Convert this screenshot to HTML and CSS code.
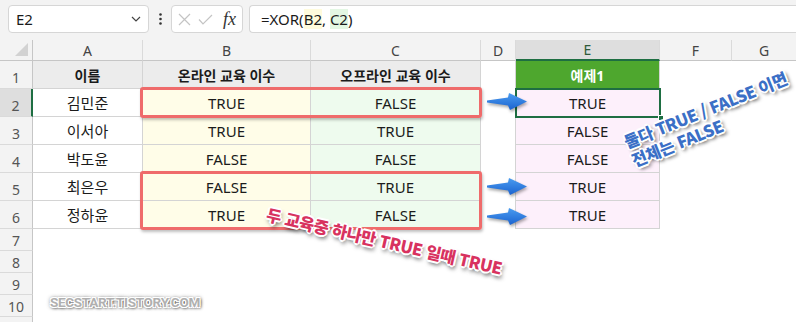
FILE: index.html
```html
<!DOCTYPE html>
<html lang="ko">
<head>
  <meta charset="UTF-8">
  <meta name="viewport" content="width=device-width, initial-scale=1.0">
  <title>XOR 함수 예제</title>
  <link rel="stylesheet" href="styles.css">
</head>
<body>
  <!-- 수식 입력줄 -->
  <div class="topbar">
    <div class="namebox">
      <span>E2</span>
      <svg width="10" height="6" viewBox="0 0 10 6"><polyline points="1,1 5,5 9,1" fill="none" stroke="#444" stroke-width="1.2"/></svg>
    </div>
    <div class="more">
      <svg width="3" height="12" viewBox="0 0 3 12"><circle cx="1.5" cy="1.5" r="1.3" fill="#333"/><circle cx="1.5" cy="6" r="1.3" fill="#333"/><circle cx="1.5" cy="10.5" r="1.3" fill="#333"/></svg>
    </div>
    <div class="fxbox">
      <svg class="ic-x" width="13" height="13" viewBox="0 0 13 13"><path d="M1 1 L12 12 M12 1 L1 12" stroke="#c4c4c4" stroke-width="1.2"/></svg>
      <svg class="ic-ok" width="15" height="11" viewBox="0 0 15 11"><polyline points="1,5.5 5,10 14,1" fill="none" stroke="#c4c4c4" stroke-width="1.2"/></svg>
      <span class="fx">fx</span>
    </div>
    <div class="formula">=XOR(<span class="ref-b">B2</span>, <span class="ref-c">C2</span>)</div>
  </div>

  <!-- 시트 -->
  <div class="sheet">
    <div class="corner"><span class="tri"></span></div>
    <div class="ch">A</div>
    <div class="ch">B</div>
    <div class="ch">C</div>
    <div class="ch">D</div>
    <div class="ch active">E</div>
    <div class="ch">F</div>
    <div class="ch last">G</div>

    <div class="rh">1</div>
    <div class="cell th">이름</div>
    <div class="cell th">온라인 교육 이수</div>
    <div class="cell th">오프라인 교육 이수</div>
    <div class="gap"></div>
    <div class="cell th-green">예제1</div>
    <div class="rest"></div>

    <div class="rh active">2</div>
    <div class="cell">김민준</div>
    <div class="cell on">TRUE</div>
    <div class="cell off">FALSE</div>
    <div class="gap"></div>
    <div class="cell res">TRUE</div>
    <div class="rest"></div>

    <div class="rh">3</div>
    <div class="cell">이서아</div>
    <div class="cell on">TRUE</div>
    <div class="cell off">TRUE</div>
    <div class="gap"></div>
    <div class="cell res">FALSE</div>
    <div class="rest"></div>

    <div class="rh">4</div>
    <div class="cell">박도윤</div>
    <div class="cell on">FALSE</div>
    <div class="cell off">FALSE</div>
    <div class="gap"></div>
    <div class="cell res">FALSE</div>
    <div class="rest"></div>

    <div class="rh">5</div>
    <div class="cell">최은우</div>
    <div class="cell on">FALSE</div>
    <div class="cell off">TRUE</div>
    <div class="gap"></div>
    <div class="cell res">TRUE</div>
    <div class="rest"></div>

    <div class="rh">6</div>
    <div class="cell">정하윤</div>
    <div class="cell on">TRUE</div>
    <div class="cell off">FALSE</div>
    <div class="gap"></div>
    <div class="cell res">TRUE</div>
    <div class="rest"></div>

    <div class="rh short">7</div><div class="blank"></div>
    <div class="rh short">8</div><div class="blank"></div>
    <div class="rh short">9</div><div class="blank"></div>
    <div class="rh short">10</div><div class="blank"></div>
    <div class="rh short"></div><div class="blank"></div>

    <!-- 강조 표시 -->
    <div class="mark mark-1"></div>
    <div class="mark mark-2"></div>
    <div class="select"><span class="handle"></span></div>

    <svg class="arrow arrow-1" width="41" height="18" viewBox="0 0 41 18"><use href="#arrow-shape"/></svg>
    <svg class="arrow arrow-2" width="41" height="18" viewBox="0 0 41 18"><use href="#arrow-shape"/></svg>
    <svg class="arrow arrow-3" width="41" height="18" viewBox="0 0 41 18"><use href="#arrow-shape"/></svg>

    <div class="note note-red">두 교육중 하나만 TRUE 일때 TRUE</div>
    <div class="note note-blue">둘다 TRUE / FALSE 이면<br>전체는 FALSE</div>
    <div class="watermark">SECSTART.TISTORY.COM</div>
  </div>

  <svg width="0" height="0" class="defs">
    <defs>
      <linearGradient id="arrow-fill" x1="0" y1="0" x2="0" y2="1">
        <stop offset="0" stop-color="#4a9cf0"/>
        <stop offset="1" stop-color="#1b63d0"/>
      </linearGradient>
      <polygon id="arrow-shape" points="0,7.5 21,4.5 22,0 40,8.5 23,17 21,12.5 0,9.5" fill="url(#arrow-fill)"/>
    </defs>
  </svg>
</body>
</html>
```

FILE: styles.css
```css
/* 기본 색상 */
:root {
  --bar-bg: #f3f3f3;
  --box-line: #d6d6d6;
  --grid-line: #d4d4d4;
  --head-line: #c6c6c6;
  --excel-green: #1e6e42;
  --outline: -1px -1px 0 #fff, 1px -1px 0 #fff, -1px 1px 0 #fff, 1px 1px 0 #fff,
    0 -2px 0 #fff, 0 2px 0 #fff, -2px 0 0 #fff, 2px 0 0 #fff;
}

* {
  box-sizing: border-box;
}

html, body {
  margin: 0;
  height: 100%;
  overflow: hidden;
}

body {
  font-family: "Noto Sans", "Noto Sans CJK KR", sans-serif;
  background: #fff;
  color: #1b1b1b;
}

/* 수식 입력줄 */
.topbar {
  display: flex;
  align-items: flex-start;
  height: 40px;
  padding: 5px 0 0 8px;
  background: var(--bar-bg);
}

.namebox {
  width: 141px;
  height: 28px;
  display: flex;
  align-items: center;
  justify-content: space-between;
  padding: 0 7px 0 7px;
  background: #fff;
  border: 1px solid var(--box-line);
  border-radius: 4px;
  font-size: 15px;
}

.more {
  width: 22px;
  height: 28px;
  display: flex;
  align-items: center;
  justify-content: center;
}

.fxbox {
  width: 72px;
  height: 28px;
  display: flex;
  align-items: center;
  background: #fff;
  border: 1px solid var(--box-line);
  border-radius: 4px;
}

.ic-x {
  margin-left: 6px;
}

.ic-ok {
  margin-left: 7px;
}

.fx {
  margin-left: 10px;
  font-family: "Liberation Serif", serif;
  font-style: italic;
  font-size: 18px;
  color: #333;
}

.formula {
  flex: 1;
  height: 28px;
  margin-left: 6px;
  display: flex;
  align-items: center;
  padding-left: 11px;
  background: #fff;
  border: 1px solid var(--box-line);
  border-right: none;
  border-radius: 4px 0 0 4px;
  font-size: 15px;
  white-space: pre;
}

.ref-b {
  background: #fffbdc;
}

.ref-c {
  background: #e3f7e3;
}

/* 시트 그리드 */
.sheet {
  position: relative;
  display: grid;
  grid-template-columns: 33px 110px 168px 170px 35px 144px 72px 1fr;
  grid-template-rows: 21px repeat(6, 28px) repeat(5, 22px);
  background: #fff;
}

.corner {
  position: relative;
  background: var(--bar-bg);
  border-right: 1px solid var(--head-line);
  border-bottom: 1px solid var(--head-line);
}

.tri {
  position: absolute;
  right: 4px;
  bottom: 4px;
  width: 0;
  height: 0;
  border-left: 13px solid transparent;
  border-bottom: 13px solid #d2d2d2;
}

.ch {
  display: flex;
  align-items: center;
  justify-content: center;
  background: var(--bar-bg);
  border-right: 1px solid #dadada;
  border-bottom: 1px solid var(--head-line);
  font-size: 14px;
  color: #444;
}

.ch.last {
  border-right: none;
}

.ch.active {
  background: #dedede;
  border-bottom: 2px solid var(--excel-green);
  color: #2d5a3a;
}

.rh {
  display: flex;
  align-items: center;
  justify-content: center;
  padding-top: 5px;
  background: var(--bar-bg);
  border-right: 1px solid var(--head-line);
  border-bottom: 1px solid #dadada;
  font-size: 14px;
  color: #555;
}

.rh.short {
  padding-top: 2px;
}

.rh.active {
  background: #dedede;
  border-right: 2px solid var(--excel-green);
}

.cell {
  display: flex;
  align-items: center;
  justify-content: center;
  border-right: 1px solid var(--grid-line);
  border-bottom: 1px solid var(--grid-line);
  font-size: 15px;
}

.th {
  background: #ececec;
  font-weight: bold;
  font-size: 14px;
}

.th-green {
  background: #4ea72e;
  color: #fff;
  font-weight: bold;
  font-size: 14px;
  border-bottom-color: #4ea72e;
}

.on {
  background: #fffde8;
}

.off {
  background: #eefbee;
}

.res {
  background: #fdf0fb;
}

.gap {
  border-right: 1px solid var(--grid-line);
}

.rest {
  grid-column: span 2;
}

.blank {
  grid-column: 2 / -1;
}

/* 강조 박스 */
.mark {
  position: absolute;
  left: 140px;
  width: 342px;
  border: 3px solid #ef6b6b;
  border-radius: 3px;
  box-shadow: 1px 2px 3px rgba(0, 0, 0, 0.25);
}

.mark-1 {
  top: 47px;
  height: 31px;
}

.mark-2 {
  top: 131px;
  height: 59px;
}

.select {
  position: absolute;
  left: 515px;
  top: 48px;
  width: 146px;
  height: 30px;
  border: 2px solid var(--excel-green);
}

.handle {
  position: absolute;
  right: -5px;
  bottom: -5px;
  width: 6px;
  height: 6px;
  background: var(--excel-green);
  border: 1px solid #fff;
}

.arrow {
  position: absolute;
  left: 487px;
  filter: drop-shadow(1px 2px 1.5px rgba(0, 0, 0, 0.35));
}

.arrow-1 { top: 53px; }
.arrow-2 { top: 138px; }
.arrow-3 { top: 168px; }

.defs {
  position: absolute;
}

/* 설명 글씨 */
.note {
  position: absolute;
  transform-origin: 0 0;
  font-family: "Noto Sans CJK KR", "Noto Sans", sans-serif;
  font-weight: 900;
  font-size: 16.5px;
  line-height: 20px;
  letter-spacing: -0.4px;
  white-space: nowrap;
}

.note-red {
  left: 269px;
  top: 164px;
  transform: rotate(13deg);
  color: #d8325f;
  text-shadow: var(--outline), 2px 3px 4px rgba(0, 0, 0, 0.75);
}

.note-blue {
  left: 621px;
  top: 93px;
  transform: rotate(-22deg);
  color: #3b6fc6;
  text-shadow: var(--outline), 2px 3px 4px rgba(0, 0, 0, 0.75);
}

.watermark {
  position: absolute;
  left: 50px;
  top: 254px;
  font-family: Roboto, "Noto Sans", sans-serif;
  font-weight: bold;
  font-size: 13.5px;
  line-height: 16px;
  letter-spacing: -0.3px;
  color: #b0b0b0;
  text-shadow: -1px -1px 0 #fff, 1px -1px 0 #fff, -1px 1px 0 #fff, 1px 1px 0 #fff,
    1px 1px 3px rgba(0, 0, 0, 0.9), 0 0 4px rgba(0, 0, 0, 0.8);
}
```
